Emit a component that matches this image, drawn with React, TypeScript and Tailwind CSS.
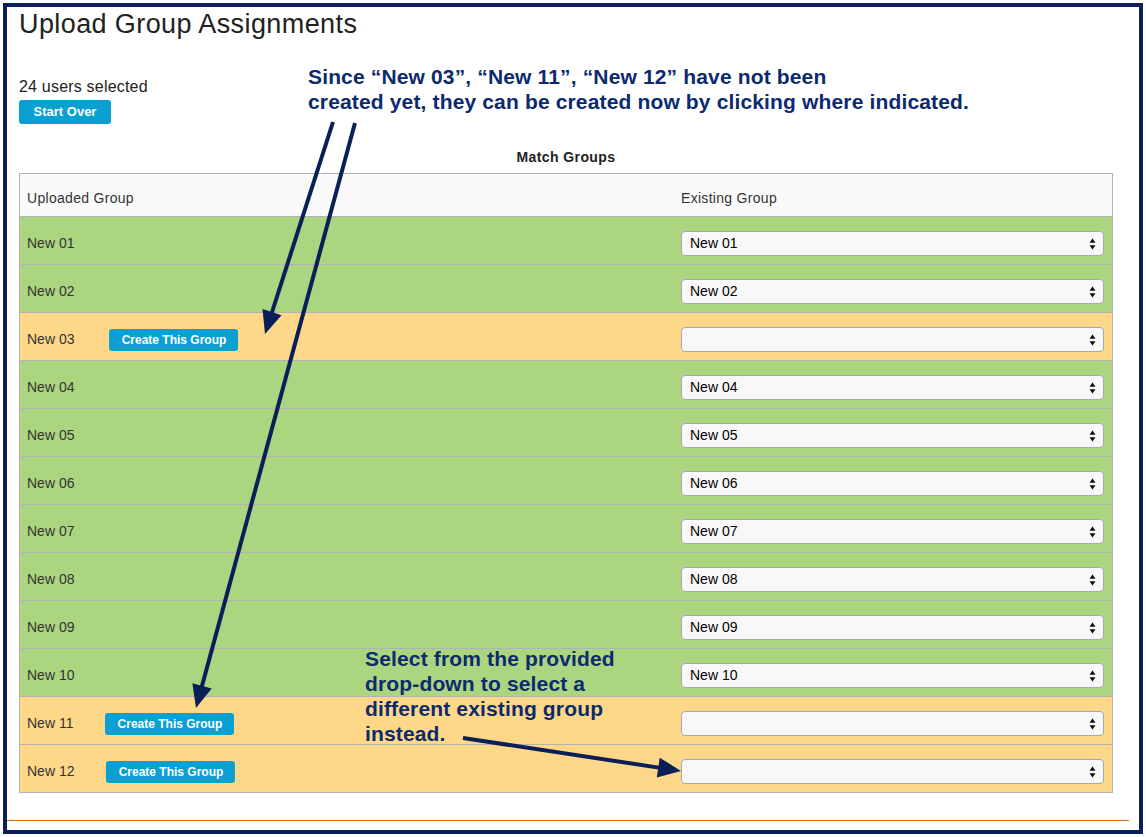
import React from 'react';

type Row = { name: string; existing: string | null };

const rows: Row[] = [
  { name: 'New 01', existing: 'New 01' },
  { name: 'New 02', existing: 'New 02' },
  { name: 'New 03', existing: null },
  { name: 'New 04', existing: 'New 04' },
  { name: 'New 05', existing: 'New 05' },
  { name: 'New 06', existing: 'New 06' },
  { name: 'New 07', existing: 'New 07' },
  { name: 'New 08', existing: 'New 08' },
  { name: 'New 09', existing: 'New 09' },
  { name: 'New 10', existing: 'New 10' },
  { name: 'New 11', existing: null },
  { name: 'New 12', existing: null },
];

function SelectBox({ value }: { value: string | null }) {
  return (
    <div className="flex h-[25px] w-full items-center justify-between rounded-[4px] border border-[#a9a9a9] bg-[#f8f8f8] pl-[8px] pr-[7px] text-[14px] text-black">
      <span>{value ?? ''}</span>
      <svg width="7" height="12" viewBox="0 0 7 12">
        <path d="M3.5 0.5 L6.5 4.8 L0.5 4.8 Z" fill="#111" />
        <path d="M3.5 11.5 L6.5 7.2 L0.5 7.2 Z" fill="#111" />
      </svg>
    </div>
  );
}

function Arrow({ x1, y1, x2, y2 }: { x1: number; y1: number; x2: number; y2: number }) {
  const dx = x2 - x1;
  const dy = y2 - y1;
  const len = Math.hypot(dx, dy);
  const ux = dx / len;
  const uy = dy / len;
  const head = 23;
  const half = 10;
  const bx = x2 - ux * head;
  const by = y2 - uy * head;
  const pts = `${x2},${y2} ${bx - uy * half},${by + ux * half} ${bx + uy * half},${by - ux * half}`;
  return (
    <g>
      <line x1={x1} y1={y1} x2={bx + ux * 2} y2={by + uy * 2} stroke="#0a1f56" strokeWidth="4" />
      <polygon points={pts} fill="#0a1f56" />
    </g>
  );
}

export default function App() {
  return (
    <div
      className="relative h-[837px] w-[1146px] bg-white p-[3px] text-[#333]"
      style={{ fontFamily: '"Liberation Sans", Arial, sans-serif' }}
    >
      <div className="h-full border-4 border-[#0a1f5c] pl-[12px]">
        <h1 className="pt-[1px] text-[27px] leading-[32px] tracking-[0.4px] text-[#222]">
          Upload Group Assignments
        </h1>

        <div className="mt-[37px] text-[16px] leading-[20px] tracking-[0.2px] text-[#222]">24 users selected</div>
        <button className="mt-[3px] h-[24px] w-[92px] rounded-[3px] bg-[#0ba0d2] text-[13px] font-bold text-white">
          Start Over
        </button>

        <div className="mt-[24px] w-[1094px] text-center text-[14px] font-bold leading-[18px] tracking-[0.4px] text-[#222]">
          Match Groups
        </div>

        <div className="mt-[7px] w-[1094px] border border-[#b3b3b3] text-[14px]">
          <div className="flex h-[43px] items-center border-b border-[#b3b3b3] bg-[#fafafa] pt-[6px] tracking-[0.3px]">
            <div className="w-[653px] pl-[7px]">Uploaded Group</div>
            <div className="pl-[8px]">Existing Group</div>
          </div>
          {rows.map((r, i) => {
            const last = i === rows.length - 1;
            const bg = r.existing ? 'bg-[#acd580]' : 'bg-[#fed888]';
            return (
              <div
                key={r.name}
                className={`flex items-center pt-[6px] ${last ? 'h-[47px]' : 'h-[48px] border-b border-[#b3b3b3]'} ${bg}`}
              >
                <div className="flex w-[653px] items-center pl-[7px]">
                  <span>{r.name}</span>
                  {!r.existing && (
                    <button
                      className={`${r.name === 'New 03' ? 'ml-[35px]' : 'ml-[32px]'} h-[22px] w-[129px] rounded-[3px] bg-[#0ba0d2] text-[12px] font-bold text-white`}
                    >
                      Create This Group
                    </button>
                  )}
                </div>
                <div className="flex-1 px-[8px]">
                  <SelectBox value={r.existing} />
                </div>
              </div>
            );
          })}
        </div>

        <div className="-ml-[12px] mr-[10px] mt-[27px] h-[1px] bg-[#d46a00]" />
      </div>

      <div className="absolute left-[308px] top-[64px] text-[21px] font-bold leading-[25px] tracking-[0.15px] text-[#0c2a6e]">
        <div>Since “New 03”, “New 11”, “New 12” have not been</div>
        <div>created yet, they can be created now by clicking where indicated.</div>
      </div>

      <div className="absolute left-[365px] top-[646px] text-[21px] font-bold leading-[25px] tracking-[0.15px] text-[#0c2a6e]">
        <div>Select from the provided</div>
        <div>drop-down to select a</div>
        <div>different existing group</div>
        <div>instead.</div>
      </div>

      <svg className="pointer-events-none absolute left-0 top-0" width="1146" height="837">
        <Arrow x1={333} y1={122} x2={265} y2={334} />
        <Arrow x1={355} y1={123} x2={196} y2={708} />
        <Arrow x1={463} y1={738} x2={681} y2={771} />
      </svg>
    </div>
  );
}
